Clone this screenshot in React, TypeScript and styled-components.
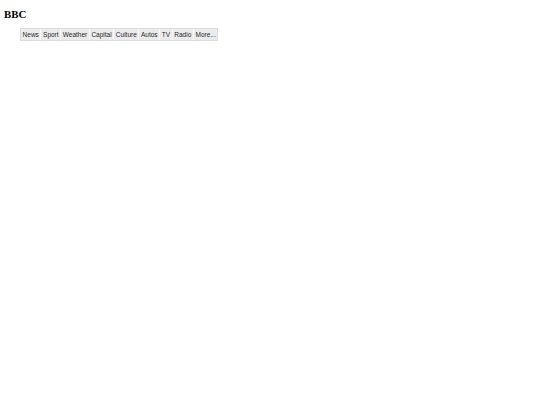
import React from "react";
import styled, { createGlobalStyle } from "styled-components";

const GlobalStyle = createGlobalStyle`
  html, body {
    margin: 0;
    padding: 0;
    background: #ffffff;
  }
`;

const Page = styled.div`
  padding: 4px;
`;

const Heading = styled.h1`
  margin: 4px 0 8px;
  font-family: "Liberation Serif", "Times New Roman", serif;
  font-weight: bold;
  font-size: 10.8px;
  line-height: 12px;
  color: #000;
`;

const NavList = styled.ul`
  display: flex;
  width: max-content;
  list-style: none;
  margin: 0 0 0 16px;
  padding: 0;
  border: 1px solid #dcdcdc;
  background: #ebebeb;
`;

const NavItem = styled.li`
  padding: 0 1.6px;
  height: 11px;
  font-family: "Liberation Sans", Arial, sans-serif;
  font-size: 6.5px;
  line-height: 11px;
  color: #2a2a2a;

  & + & {
    border-left: 1px solid #fafafa;
  }
`;

const items = ["News", "Sport", "Weather", "Capital", "Culture", "Autos", "TV", "Radio", "More..."];

export default function App() {
  return (
    <Page>
      <GlobalStyle />
      <Heading>BBC</Heading>
      <NavList>
        {items.map((item) => (
          <NavItem key={item}>{item}</NavItem>
        ))}
      </NavList>
    </Page>
  );
}
